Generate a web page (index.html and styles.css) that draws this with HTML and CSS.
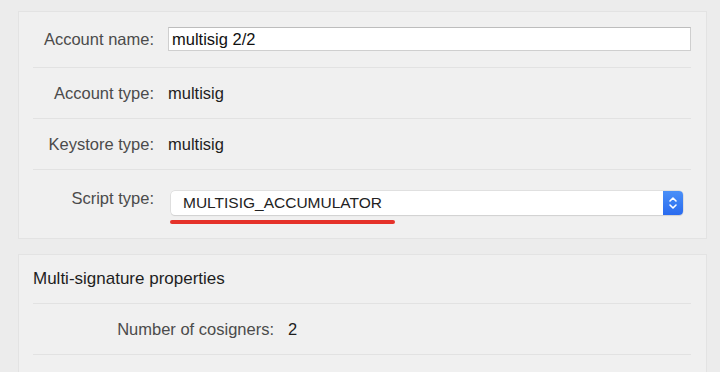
FILE: index.html
```
<!DOCTYPE html>
<html lang="en">
<head>
  <meta charset="UTF-8" />
  <meta name="viewport" content="width=device-width, initial-scale=1.0"/>
  <title>Account settings</title>
  <link rel="stylesheet" href="styles.css">
</head>
<body>

  <!-- Account details -->
  <section class="pane">
    <div class="row row-name">
      <span class="key">Account name:</span>
      <input class="text-field" type="text" value="multisig 2/2" />
    </div>
    <div class="row">
      <span class="key">Account type:</span>
      <span class="value">multisig</span>
    </div>
    <div class="row">
      <span class="key">Keystore type:</span>
      <span class="value">multisig</span>
    </div>
    <div class="row row-script">
      <span class="key">Script type:</span>
      <div class="popup">
        <span class="popup-text">MULTISIG_ACCUMULATOR</span>
        <span class="stepper">
          <svg width="10" height="16" viewBox="0 0 10 16">
            <path d="M2 6 L5 3 L8 6" fill="none" stroke="#fff" stroke-width="1.6" stroke-linecap="round" stroke-linejoin="round"/>
            <path d="M2 10 L5 13 L8 10" fill="none" stroke="#fff" stroke-width="1.6" stroke-linecap="round" stroke-linejoin="round"/>
          </svg>
        </span>
        <span class="marker"></span>
      </div>
    </div>
  </section>

  <!-- Multi-signature -->
  <section class="pane pane-multi">
    <div class="row row-title">Multi-signature properties</div>
    <div class="row">
      <span class="key">Number of cosigners:</span>
      <span class="value">2</span>
    </div>
    <div class="row row-more"></div>
  </section>

</body>
</html>
```

FILE: styles.css
```
body {
  margin: 0;
  padding-top: 11px;
  font-family: 'Liberation Sans', Arial, sans-serif;
  font-size: 16.5px;
  background-color: #ececec;
  color: #1e1e1e;
}

.pane {
  margin: 0 13px 0 18px;
  padding: 0 15px 0 14px;
  background-color: #f0f0f0;
  border: 1px solid #e3e3e3;
}

.pane-multi {
  margin-top: 15px;
}

.row {
  display: grid;
  grid-template-columns: 121px 1fr;
  column-gap: 14px;
  align-items: center;
  height: 49px;
  border-bottom: 1px solid #e2e2e2;
}

.row + .row {
  height: 50px;
}

.key {
  text-align: right;
  color: #4b4b4b;
  line-height: 18px;
}

.value {
  line-height: 18px;
}

.row-name {
  height: auto;
  padding: 15px 0 16px;
}

.text-field {
  height: 24px;
  box-sizing: border-box;
  margin: 0;
  padding: 0 3px;
  border: 1px solid #cfcfcf;
  border-top-color: #bdbdbd;
  background-color: #fff;
  font-family: inherit;
  font-size: 16.5px;
  color: #111;
  outline: none;
}

.row + .row-script {
  height: 68px;
  align-items: start;
  border-bottom: none;
}

.row-script .key {
  margin-top: 19px;
}

.popup {
  position: relative;
  display: flex;
  align-items: center;
  height: 24px;
  margin: 21px 8px 0 3px;
  background-color: #fff;
  border-radius: 4px;
  box-shadow: 0 0 0 0.5px #d0d0d0, 0 1px 1px rgba(0, 0, 0, 0.12);
}

.popup-text {
  flex: 1;
  padding-left: 12px;
  font-size: 15.5px;
  color: #222;
}

.stepper {
  display: flex;
  align-items: center;
  justify-content: center;
  width: 20px;
  height: 24px;
  border-radius: 0 4px 4px 0;
  background: linear-gradient(#4a90f8, #2a6bef);
}

.marker {
  position: absolute;
  left: -1px;
  top: 29px;
  width: 225px;
  height: 4px;
  border-radius: 2px;
  background-color: #e5322a;
}

.pane-multi .row {
  grid-template-columns: 241px 1fr;
}

.pane-multi .row-title {
  display: flex;
  height: 48px;
  font-size: 17px;
  color: #1e1e1e;
}

.row-more {
  border-bottom: none;
}
```
